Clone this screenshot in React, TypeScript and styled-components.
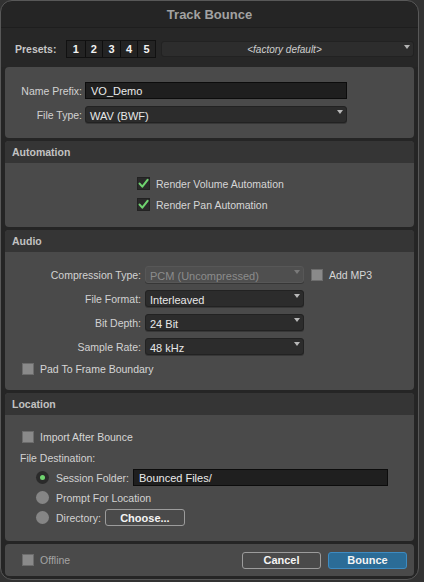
import React, { FC, ReactNode, useState } from 'react';
import styled, { createGlobalStyle, css } from 'styled-components';

const GlobalStyle = createGlobalStyle`
  html, body {
    margin: 0;
    padding: 0;
    background: #323232;
    font-family: "Liberation Sans", Arial, sans-serif;
  }
  * { box-sizing: border-box; }
`

interface CheckProps {
  checked?: boolean
  dim?: boolean
  children?: ReactNode
}

const CheckRow: FC<CheckProps> = ({ checked = false, dim, children }) => {
  const [on, setOn] = useState<boolean>(checked)
  return (
    <CheckLabel $dim={dim} onClick={() => setOn(!on)}>
      <Box $checked={on}>
        {on && (
          <svg width="11" height="11" viewBox="0 0 11 11">
            <path d="M1.6 5.6 L4.3 8.6 L9.6 1.8" fill="none" stroke="#6fd36f" strokeWidth="2.1" strokeLinecap="round" strokeLinejoin="round" />
          </svg>
        )}
      </Box>
      {children}
    </CheckLabel>
  )
}

interface SelectProps {
  value: string
  disabled?: boolean
}

const Select: FC<SelectProps> = ({ value, disabled }) => (
  <SelectBox $disabled={disabled}>{value}</SelectBox>
)

const destinations = ['Session Folder:', 'Prompt For Location', 'Directory:']

export default function App() {
  const [dest, setDest] = useState<number>(0)

  return (
    <>
      <GlobalStyle />
      <Window>
        <TitleBar>Track Bounce</TitleBar>
        <PresetsRow>
          <PresetsLabel>Presets:</PresetsLabel>
          <PresetGroup>
            {[1, 2, 3, 4, 5].map(n => <PresetBtn key={n}>{n}</PresetBtn>)}
          </PresetGroup>
          <PresetMenu>&lt;factory default&gt;</PresetMenu>
        </PresetsRow>

        <Sections>
          <Panel>
            <PanelBody $pad="15px 0 15px">
              <FormGrid $label={77} $control={262} $gap={3}>
                <FieldLabel>Name Prefix:</FieldLabel>
                <TextInput>VO_Demo</TextInput>
                <FieldLabel>File Type:</FieldLabel>
                <Select value="WAV (BWF)" />
              </FormGrid>
            </PanelBody>
          </Panel>

          <Panel>
            <PanelHeader>Automation</PanelHeader>
            <PanelBody $pad="14px 0 16px 132px">
              <Stack $gap={8}>
                <CheckRow checked>Render Volume Automation</CheckRow>
                <CheckRow checked>Render Pan Automation</CheckRow>
              </Stack>
            </PanelBody>
          </Panel>

          <Panel>
            <PanelHeader>Audio</PanelHeader>
            <PanelBody $pad="14px 0 15px">
              <FormGrid $label={136} $control={159} $gap={4} $extra>
                <FieldLabel>Compression Type:</FieldLabel>
                <Select value="PCM (Uncompressed)" disabled />
                <Extra><CheckRow>Add MP3</CheckRow></Extra>
                <FieldLabel>File Format:</FieldLabel>
                <Select value="Interleaved" />
                <span />
                <FieldLabel>Bit Depth:</FieldLabel>
                <Select value="24 Bit" />
                <span />
                <FieldLabel>Sample Rate:</FieldLabel>
                <Select value="48 kHz" />
                <span />
              </FormGrid>
              <Indent $left={17} $top={8}>
                <CheckRow>Pad To Frame Boundary</CheckRow>
              </Indent>
            </PanelBody>
          </Panel>

          <Panel>
            <PanelHeader>Location</PanelHeader>
            <PanelBody $pad="16px 0 15px">
              <Indent $left={17}>
                <CheckRow>Import After Bounce</CheckRow>
              </Indent>
              <Indent $left={15} $top={5}>
                <PlainText>File Destination:</PlainText>
              </Indent>
              <RadioList>
                {destinations.map((d, i) => (
                  <RadioRow key={d} onClick={() => setDest(i)}>
                    <Radio $on={dest === i} />
                    <PlainText>{d}</PlainText>
                    {i === 0 && <PathInput>Bounced Files/</PathInput>}
                    {i === 2 && <Button>Choose...</Button>}
                  </RadioRow>
                ))}
              </RadioList>
            </PanelBody>
          </Panel>

          <Footer>
            <CheckRow dim>Offline</CheckRow>
            <FooterButtons>
              <Button $wide>Cancel</Button>
              <Button $wide $primary>Bounce</Button>
            </FooterButtons>
          </Footer>
        </Sections>
      </Window>
    </>
  )
}

const Window = styled.div`
  width: 419px;
  height: 580px;
  background: #252525;
  border: 1px solid #585858;
  border-radius: 12px;
  overflow: hidden;
  display: flex;
  flex-direction: column;
`

const TitleBar = styled.div`
  height: 27px;
  display: flex;
  align-items: center;
  justify-content: center;
  font-size: 13px;
  font-weight: bold;
  color: #a2a2a2;
  border-bottom: 1px solid #1e1e1e;
`

const PresetsRow = styled.div`
  display: flex;
  align-items: center;
  padding: 12px 4px 9px 14px;
  background: #272727;
`

const PresetsLabel = styled.span`
  font-size: 10.5px;
  font-weight: bold;
  color: #c6c6c6;
  width: 51px;
`

const PresetGroup = styled.div`
  display: flex;
  border: 1px solid #111;
`

const PresetBtn = styled.div`
  width: 17.6px;
  height: 16px;
  display: grid;
  place-items: center;
  background: #232323;
  border-left: 1px solid #0e0e0e;
  font-size: 11px;
  font-weight: bold;
  color: #f2f2f2;

  &:first-child {
    border-left: none;
  }
`

const PresetMenu = styled.div`
  position: relative;
  flex: 1;
  margin-left: 5px;
  height: 16px;
  border-radius: 3px;
  background: #2d2d2d;
  border: 1px solid #222;
  display: flex;
  align-items: center;
  justify-content: center;
  padding-right: 6px;
  font-size: 10px;
  font-style: italic;
  color: #cfcfcf;

  &::after {
    content: '';
    position: absolute;
    right: 3px;
    top: 3px;
    border-left: 3.5px solid transparent;
    border-right: 3.5px solid transparent;
    border-top: 4px solid #b4b4b4;
  }
`

const Sections = styled.div`
  display: flex;
  flex-direction: column;
  gap: 3px;
  padding: 0 4px;
`

const Panel = styled.section`
  background: #4a4a4a;
  border-radius: 4px;
  overflow: hidden;
`

const PanelHeader = styled.div`
  height: 22px;
  display: flex;
  align-items: center;
  padding-left: 7px;
  background: #353535;
  font-size: 10.5px;
  font-weight: bold;
  color: #c2c2c2;
`

const PanelBody = styled.div<{ $pad: string }>`
  padding: ${p => p.$pad};
`

const FormGrid = styled.div<{ $label: number; $control: number; $gap: number; $extra?: boolean }>`
  display: grid;
  grid-template-columns: ${p => `${p.$label}px ${p.$control}px${p.$extra ? ' auto' : ''}`};
  column-gap: ${p => p.$gap}px;
  row-gap: 7px;
  align-items: center;
`

const FieldLabel = styled.span`
  text-align: right;
  font-size: 10.5px;
  color: #d2d2d2;
  white-space: nowrap;
`

const PlainText = styled.span`
  font-size: 10.5px;
  color: #d2d2d2;
  white-space: nowrap;
`

const fieldBase = css`
  height: 17px;
  display: flex;
  align-items: center;
  font-size: 11px;
  white-space: nowrap;
`

const TextInput = styled.div`
  ${fieldBase};
  padding-left: 5px;
  background: #1f1f1f;
  border: 1px solid #0c0c0c;
  color: #ececec;
`

const PathInput = styled(TextInput)`
  width: 255px;
  margin-left: 4px;
`

const SelectBox = styled.div<{ $disabled?: boolean }>`
  ${fieldBase};
  position: relative;
  padding: 2px 0 0 4px;
  border-radius: 3px;
  background: ${p => (p.$disabled ? '#4f4f4f' : '#2c2c2c')};
  border: 1px solid ${p => (p.$disabled ? '#575757' : '#222')};
  color: ${p => (p.$disabled ? '#8c8c8c' : '#e8e8e8')};
  box-shadow: 0 1px 0 rgba(0, 0, 0, 0.25);

  &::after {
    content: '';
    position: absolute;
    right: 3px;
    top: 3px;
    border-left: 3.5px solid transparent;
    border-right: 3.5px solid transparent;
    border-top: 4px solid ${p => (p.$disabled ? '#7a7a7a' : '#b8b8b8')};
  }
`

const Extra = styled.div`
  padding-left: 3px;
`

const Stack = styled.div<{ $gap: number }>`
  display: flex;
  flex-direction: column;
  gap: ${p => p.$gap}px;
`

const Indent = styled.div<{ $left: number; $top?: number }>`
  padding-left: ${p => p.$left}px;
  margin-top: ${p => p.$top ?? 0}px;
`

const CheckLabel = styled.label<{ $dim?: boolean }>`
  display: flex;
  align-items: center;
  gap: 6px;
  font-size: 10.5px;
  color: ${p => (p.$dim ? '#a4a4a4' : '#d6d6d6')};
  cursor: default;
  white-space: nowrap;
`

const Box = styled.span<{ $checked: boolean }>`
  width: 12px;
  height: 12px;
  display: grid;
  place-items: center;
  ${p =>
    p.$checked
      ? css`
          width: 13px;
          height: 13px;
          background: #2a2a2a;
          border: 1px solid #222;
        `
      : css`
          background: #8a8a8a;
          border: 1px solid #6c6c6c;
        `}
`

const RadioList = styled.div`
  display: flex;
  flex-direction: column;
  gap: 3px;
  padding-left: 31px;
  margin-top: 3px;
`

const RadioRow = styled.div`
  height: 17px;
  display: flex;
  align-items: center;
`

const Radio = styled.span<{ $on: boolean }>`
  width: 13px;
  height: 13px;
  border-radius: 50%;
  margin-right: 7px;
  flex-shrink: 0;
  ${p =>
    p.$on
      ? css`
          background: #2a2a2a;
          display: grid;
          place-items: center;
          &::after {
            content: '';
            width: 5px;
            height: 5px;
            border-radius: 50%;
            background: #6fd36f;
          }
        `
      : css`
          background: #858585;
        `}
`

const Button = styled.button<{ $wide?: boolean; $primary?: boolean }>`
  height: 17px;
  width: ${p => (p.$wide ? 79 : 80)}px;
  margin-left: ${p => (p.$wide ? 0 : 4)}px;
  border-radius: 3px;
  font-family: inherit;
  font-size: 11px;
  font-weight: bold;
  color: #f4f4f4;
  padding: 0;
  background: ${p => (p.$primary ? '#2b6c97' : '#4a4a4a')};
  border: 1px solid ${p => (p.$primary ? '#3d8bc2' : '#9c9c9c')};
`

const Footer = styled.footer`
  height: 32px;
  display: flex;
  align-items: center;
  justify-content: space-between;
  padding: 0 7px 0 17px;
  background: #4a4a4a;
  border-radius: 4px;
`

const FooterButtons = styled.div`
  display: flex;
  gap: 7px;
`
